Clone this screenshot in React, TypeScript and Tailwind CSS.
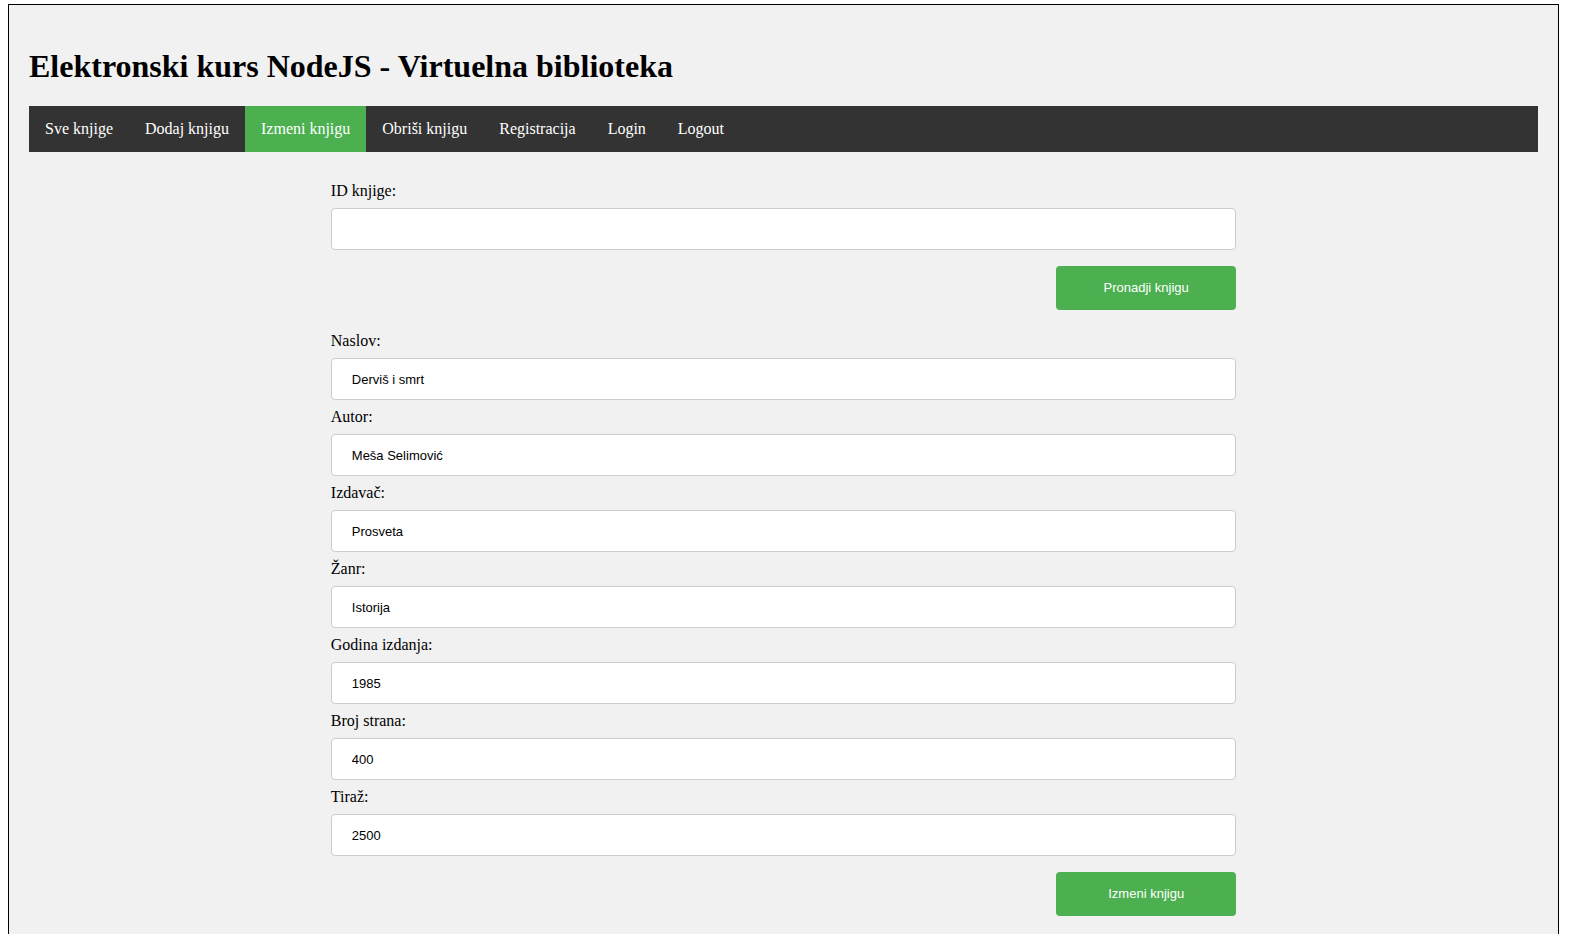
import React from "react";

const navItems = [
  "Sve knjige",
  "Dodaj knjigu",
  "Izmeni knjigu",
  "Obriši knjigu",
  "Registracija",
  "Login",
  "Logout",
];

const fields = [
  { label: "Naslov:", value: "Derviš i smrt" },
  { label: "Autor:", value: "Meša Selimović" },
  { label: "Izdavač:", value: "Prosveta" },
  { label: "Žanr:", value: "Istorija" },
  { label: "Godina izdanja:", value: "1985" },
  { label: "Broj strana:", value: "400" },
  { label: "Tiraž:", value: "2500" },
];

const serif = "font-['Liberation_Serif','Times_New_Roman',serif]";
const sans = "font-['Liberation_Sans',Arial,sans-serif]";

function Field({ label, value }: { label: string; value: string }) {
  return (
    <div className="flex flex-col">
      <label className={`${serif} text-[16px] leading-[18px] text-black`}>{label}</label>
      <input
        readOnly
        value={value}
        className={`${sans} mt-[8px] mb-[8px] h-[42px] w-full rounded-[4px] border border-[#cccccc] bg-white px-[20px] text-[13px] text-black outline-none`}
      />
    </div>
  );
}

function GreenButton({ children }: { children: React.ReactNode }) {
  return (
    <div className="flex justify-end">
      <button
        className={`${sans} mt-[8px] h-[44px] w-[180px] rounded-[4px] bg-[#4caf50] text-[13px] text-white`}
      >
        {children}
      </button>
    </div>
  );
}

export default function App() {
  return (
    <div className="min-h-screen bg-white pt-[4px] pl-[8px]">
      <div className="w-[1551px] border border-black bg-[#f1f1f1] px-[20px] pb-[40px]">
        <h1 className={`${serif} mt-[43px] text-[32px] font-bold leading-[37px] text-black`}>
          Elektronski kurs NodeJS - Virtuelna biblioteka
        </h1>

        <nav className={`${serif} mt-[21px] flex h-[46px] bg-[#333333] text-[16px] text-white`}>
          {navItems.map((item) => (
            <a
              key={item}
              href="#"
              className={`flex items-center px-[16px] ${item === "Izmeni knjigu" ? "bg-[#4caf50]" : ""}`}
            >
              {item}
            </a>
          ))}
        </nav>

        <form className="mx-auto mt-[30px] w-[60%]">
          <Field label="ID knjige:" value="" />
          <GreenButton>Pronadji knjigu</GreenButton>
          <div className="mt-[22px]">
            {fields.map((f) => (
              <Field key={f.label} label={f.label} value={f.value} />
            ))}
          </div>
          <GreenButton>Izmeni knjigu</GreenButton>
        </form>
      </div>
    </div>
  );
}
